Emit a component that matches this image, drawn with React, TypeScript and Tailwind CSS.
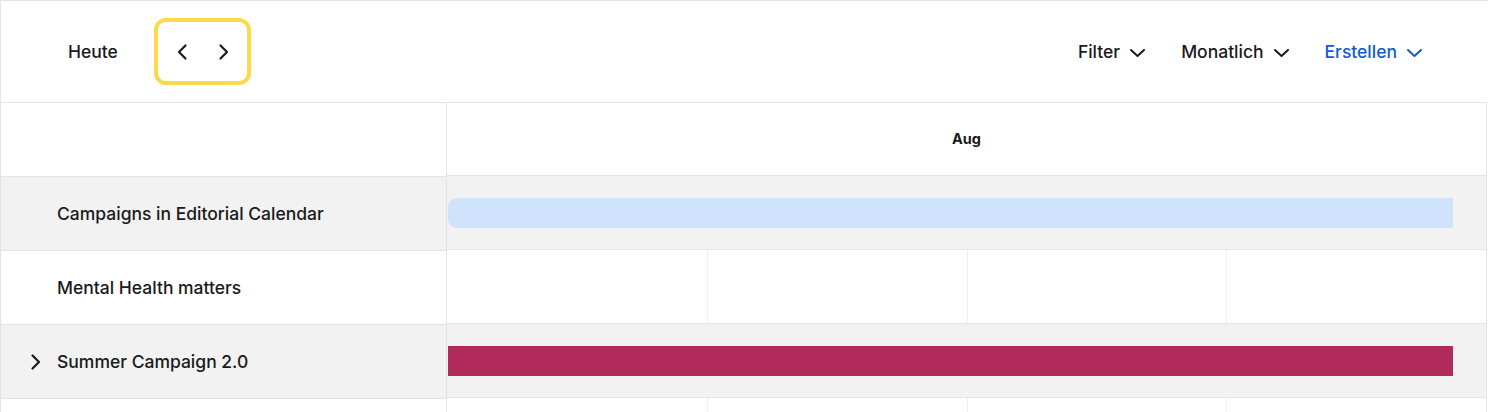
import React from 'react';

function ChevronLeft({ className = '' }: { className?: string }) {
  return (
    <svg className={className} width="14" height="18" viewBox="0 0 14 18" fill="none">
      <path d="M10.5 2.5 L4 9 L10.5 15.5" stroke="currentColor" strokeWidth="2.2" strokeLinecap="round" strokeLinejoin="round" />
    </svg>
  );
}

function ChevronRight({ className = '' }: { className?: string }) {
  return (
    <svg className={className} width="14" height="18" viewBox="0 0 14 18" fill="none">
      <path d="M3.5 2.5 L10 9 L3.5 15.5" stroke="currentColor" strokeWidth="2.2" strokeLinecap="round" strokeLinejoin="round" />
    </svg>
  );
}

function ChevronDown({ className = '' }: { className?: string }) {
  return (
    <svg className={className} width="17" height="10" viewBox="0 0 17 10" fill="none">
      <path d="M2 2 L8.5 8 L15 2" stroke="currentColor" strokeWidth="2" strokeLinecap="round" strokeLinejoin="round" />
    </svg>
  );
}

interface Row {
  name: string;
  expandable?: boolean;
  bar?: 'blue' | 'red';
}

const rows: Row[] = [
  { name: 'Campaigns in Editorial Calendar', bar: 'blue' },
  { name: 'Mental Health matters' },
  { name: 'Summer Campaign 2.0', expandable: true, bar: 'red' },
  { name: '' },
];

export default function App() {
  return (
    <div
      className="w-[1488px] h-[412px] overflow-hidden bg-white text-[#1a1a1a] border-t border-l border-[#e4e4e4]"
      style={{ fontFamily: 'Inter, "Noto Sans", sans-serif' }}
    >
      {/* toolbar */}
      <div className="h-[101px] flex items-center justify-between pl-[67px] pr-[65px]">
        <div className="flex items-center">
          <button className="text-[17.5px] font-medium pt-[2px]">Heute</button>
          <div className="ml-[36px] w-[97px] h-[67px] border-4 border-[#fbd94b] rounded-[12px] flex items-center justify-center gap-[28px] pl-[2px]">
            <ChevronLeft />
            <ChevronRight />
          </div>
        </div>
        <div className="flex items-center gap-[35px] text-[17.5px] font-medium pt-[2px]">
          <button className="flex items-center gap-[9px]">
            Filter
            <ChevronDown />
          </button>
          <button className="flex items-center gap-[9px]">
            Monatlich
            <ChevronDown />
          </button>
          <button className="flex items-center gap-[9px] text-[#0f5bd3]">
            Erstellen
            <ChevronDown />
          </button>
        </div>
      </div>

      {/* timeline grid */}
      <div className="w-[1486px] border-t border-r border-[#e4e4e4] grid grid-cols-[446px_1fr]">
        <div className="border-r border-[#e4e4e4]">
          <div className="h-[74px] border-b border-[#e4e4e4]" />
          {rows.map((row, i) => (
            <div
              key={i}
              className={`h-[74px] border-b border-[#e4e4e4] flex items-center pl-[56px] pt-[2px] relative text-[17.5px] font-medium ${
                i % 2 === 0 ? 'bg-[#f2f2f2]' : 'bg-white'
              }`}
            >
              {row.expandable && (
                <ChevronRight className="absolute left-[28px] top-1/2 -translate-y-1/2" />
              )}
              {row.name}
            </div>
          ))}
        </div>
        <div>
          <div className="h-[73px] border-b border-[#e4e4e4] flex items-center justify-center text-[14.5px] font-bold">
            Aug
          </div>
          {rows.map((row, i) =>
            row.bar ? (
              <div key={i} className="h-[74px] border-b border-[#e4e4e4] bg-[#f2f2f2] flex items-center pl-[1px] pr-[33px]">
                <div
                  className={
                    row.bar === 'blue'
                      ? 'h-[30px] w-full bg-[#d0e3fd] rounded-l-[9px]'
                      : 'h-[30px] w-full bg-[#b12b5a]'
                  }
                />
              </div>
            ) : (
              <div key={i} className="h-[74px] border-b border-[#e4e4e4] bg-white grid grid-cols-4 pl-[2px]">
                <div className="border-r border-[#efefef]" />
                <div className="border-r border-[#efefef]" />
                <div className="border-r border-[#efefef]" />
                <div />
              </div>
            )
          )}
        </div>
      </div>
    </div>
  );
}
